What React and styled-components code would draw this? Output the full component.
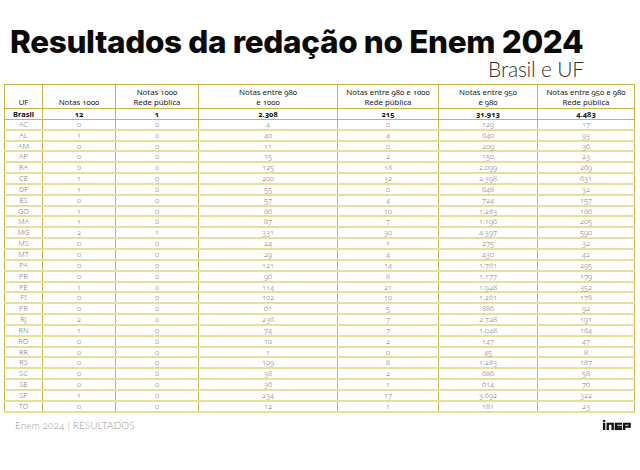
import React from "react";
import styled, { createGlobalStyle } from "styled-components";

const Global = createGlobalStyle`
  html, body { margin: 0; padding: 0; background: #fff; }
  #root { width: 640px; height: 470px; }
`;

const Page = styled.div`
  width: 640px;
  height: 470px;
  box-sizing: border-box;
  padding: 26px 0 0 4px;
  display: flex;
  flex-direction: column;
  font-family: "Noto Sans", "Lato", sans-serif;
  font-variant-numeric: oldstyle-nums;
`;

const Title = styled.h1`
  margin: 0 0 0 6px;
  font-family: "Inter", "Lato", sans-serif;
  font-weight: 800;
  font-size: 31.5px;
  line-height: 32px;
  letter-spacing: -0.35px;
  color: #0a0a0a;
`;

const Subtitle = styled.div`
  align-self: flex-end;
  margin-right: 56px;
  font-family: "Lato", sans-serif;
  font-weight: 300;
  font-size: 21px;
  line-height: 21px;
  letter-spacing: -0.2px;
  color: #333;
`;

const Table = styled.table`
  margin-top: 5px;
  width: 630px;
  border-collapse: collapse;
  table-layout: fixed;
`;

const HeadCell = styled.th`
  border: 1px solid #c9b54c;
  height: 22px;
  padding: 0 1px 1px;
  vertical-align: bottom;
  font-weight: 400;
  font-size: 7.8px;
  line-height: 9.5px;
  color: #222;
  text-align: center;
  white-space: nowrap;
`;

const Cell = styled.td`
  border-left: 1px solid #c9b54c;
  border-right: 1px solid #c9b54c;
  border-bottom: ${(p) => (p.$strong ? "1px solid #c9b54c" : "2px solid #e8df9c")};
  height: ${(p) => (p.$strong ? "9.85px" : "8.85px")};
  padding: 0;
  font-size: 7.5px;
  line-height: 8.8px;
  text-align: center;
  color: ${(p) => (p.$strong ? "#111" : "#808080")};
  font-weight: ${(p) => (p.$strong ? 700 : 300)};
  white-space: nowrap;
`;

const Footer = styled.div`
  display: flex;
  justify-content: space-between;
  align-items: center;
  width: 630px;
  margin-top: 6px;
`;

const FooterText = styled.span`
  margin-left: 11px;
  font-family: "Lato", sans-serif;
  font-weight: 300;
  font-size: 10px;
  letter-spacing: 0.1px;
  color: #999;
`;

const Logo = styled.svg`
  width: 31px;
  height: 10px;
  margin-right: 1px;
`;

const widths = [38, 73, 83, 139, 101, 99, 97];

const headers = [
  ["UF"],
  ["Notas 1000"],
  ["Notas 1000", "Rede pública"],
  ["Notas entre 980", "e 1000"],
  ["Notas entre 980 e 1000", "Rede pública"],
  ["Notas entre 950", "e 980"],
  ["Notas entre 950 e 980", "Rede pública"],
];

const rows = [
  ["Brasil", "12", "1", "2.308", "215", "31.913", "4.483"],
  ["AC", "0", "0", "4", "0", "129", "17"],
  ["AL", "1", "0", "40", "4", "640", "93"],
  ["AM", "0", "0", "11", "0", "209", "36"],
  ["AP", "0", "0", "15", "2", "150", "23"],
  ["BA", "0", "0", "125", "18", "2.099", "269"],
  ["CE", "1", "0", "200", "32", "2.398", "631"],
  ["DF", "1", "0", "55", "0", "648", "32"],
  ["ES", "0", "0", "57", "4", "724", "157"],
  ["GO", "1", "0", "86", "10", "1.283", "186"],
  ["MA", "1", "0", "87", "7", "1.196", "205"],
  ["MG", "2", "1", "331", "30", "4.397", "590"],
  ["MS", "0", "0", "24", "1", "275", "32"],
  ["MT", "0", "0", "29", "4", "430", "42"],
  ["PA", "0", "0", "121", "14", "1.761", "295"],
  ["PB", "0", "0", "96", "8", "1.177", "179"],
  ["PE", "1", "0", "114", "21", "1.928", "352"],
  ["PI", "0", "0", "102", "10", "1.261", "178"],
  ["PR", "0", "0", "61", "5", "886", "92"],
  ["RJ", "2", "0", "236", "7", "2.728", "191"],
  ["RN", "1", "0", "74", "7", "1.048", "164"],
  ["RO", "0", "0", "10", "2", "147", "47"],
  ["RR", "0", "0", "1", "0", "45", "8"],
  ["RS", "0", "0", "109", "8", "1.283", "187"],
  ["SC", "0", "0", "38", "2", "686", "58"],
  ["SE", "0", "0", "36", "1", "614", "76"],
  ["SP", "1", "0", "234", "17", "3.692", "322"],
  ["TO", "0", "0", "12", "1", "181", "23"],
];

function InepLogo() {
  return (
    <Logo viewBox="0 0 32 11" aria-label="inep">
      <g fill="#111">
        <rect x="0" y="0" width="2.6" height="2" />
        <rect x="0" y="3" width="2.6" height="8" />
        <path d="M4 3h8v8h-2.6V5.2H6.6V11H4z" />
        <path d="M13 3h8v2.2h-5.4v1.2H21v2.2h-5.4v0.2H21V11h-8z" />
        <path d="M22 3h8.6v5.6h-6V11H22zM24.6 5.2v1.2h3.4V5.2z" />
      </g>
    </Logo>
  );
}

export default function App() {
  return (
    <>
      <Global />
      <Page>
        <Title>Resultados da redação no Enem 2024</Title>
        <Subtitle>Brasil e UF</Subtitle>
        <Table>
          <colgroup>
            {widths.map((w, i) => (
              <col key={i} style={{ width: w }} />
            ))}
          </colgroup>
          <thead>
            <tr>
              {headers.map((h, i) => (
                <HeadCell key={i}>
                  {h.map((line, j) => (
                    <div key={j}>{line}</div>
                  ))}
                </HeadCell>
              ))}
            </tr>
          </thead>
          <tbody>
            {rows.map((r, i) => (
              <tr key={i}>
                {r.map((c, j) => (
                  <Cell key={j} $strong={i === 0}>
                    {c}
                  </Cell>
                ))}
              </tr>
            ))}
          </tbody>
        </Table>
        <Footer>
          <FooterText>Enem 2024 | RESULTADOS</FooterText>
          <InepLogo />
        </Footer>
      </Page>
    </>
  );
}
